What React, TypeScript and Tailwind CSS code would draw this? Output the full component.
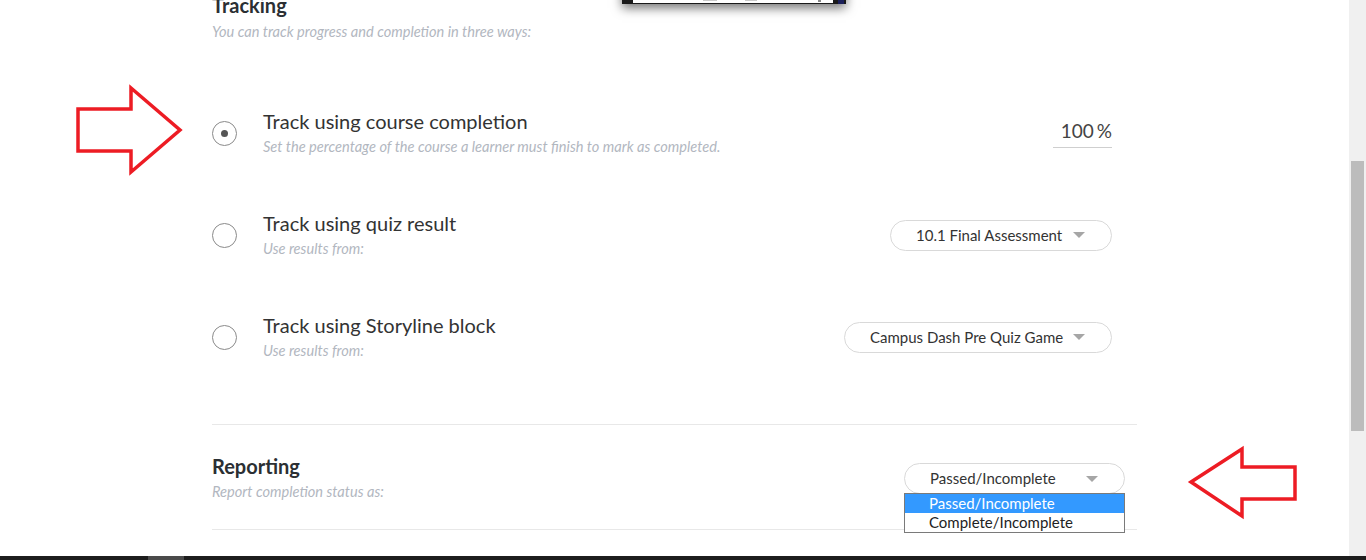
import React from "react";

const FONT = "font-['Lato','Open_Sans','Liberation_Sans',sans-serif]";

function Caret() {
  return (
    <svg width="12" height="6" viewBox="0 0 12 6" className="shrink-0">
      <path d="M0 0 L12 0 L6 6 Z" fill="#a6a6a6" />
    </svg>
  );
}

function Select({ label, width }: { label: string; width: string }) {
  return (
    <div
      className={`flex h-[31px] ${width} items-center justify-between rounded-full border border-[#d9d9d9] bg-white pl-[25px] pr-[26px] text-[15px] text-[#333]`}
    >
      <span>{label}</span>
      <Caret />
    </div>
  );
}

function Radio({ checked }: { checked?: boolean }) {
  return (
    <div className="flex h-[25px] w-[25px] shrink-0 items-center justify-center rounded-full border border-[#8a8a8a] bg-white">
      {checked && <div className="h-[7px] w-[7px] rounded-full bg-[#555]" />}
    </div>
  );
}

function TrackRow({
  title,
  hint,
  checked,
  control,
}: {
  title: string;
  hint: string;
  checked?: boolean;
  control: React.ReactNode;
}) {
  return (
    <div className="flex h-[48px] items-center pr-[25px]">
      <Radio checked={checked} />
      <div className="ml-[26px] flex flex-1 flex-col">
        <div className="text-[20px] leading-[22px] text-[#333]">{title}</div>
        <div className="mt-[5px] text-[14.6px] italic leading-[20px] text-[#b2b7bf]">{hint}</div>
      </div>
      {control}
    </div>
  );
}

export default function App() {
  return (
    <div className={`h-[560px] w-[1366px] overflow-hidden bg-white ${FONT}`}>
      <div className="flex h-[556px]">
        {/* ===== Page ===== */}
        <div className="relative flex-1 overflow-hidden">
          {/* floating screenshot, scrolled off the top */}
          <div className="absolute left-[622px] top-[-40px] h-[44px] w-[224px] bg-[#1a1a1a] shadow-[0_4px_10px_rgba(0,0,0,0.55)]">
            <div className="absolute bottom-[1px] left-[11px] right-[13px] h-[43px] bg-white">
              <div className="absolute bottom-[2px] left-[70px] h-[1px] w-[14px] bg-[#c8c8c8]" />
              <div className="absolute bottom-[2px] left-[112px] h-[1px] w-[12px] bg-[#c8c8c8]" />
              <div className="absolute bottom-[1px] left-[185px] h-[3px] w-[3px] bg-[#888]" />
            </div>
            <div className="absolute bottom-0 right-[2px] h-[4px] w-[6px] bg-[#1b1f5a]" />
          </div>

          <div className="ml-[212px] w-[925px]">
            {/* ===== Tracking ===== */}
            <h2 className="-mt-[7px] text-[20px] font-bold leading-[24px] text-[#2b2f33]">Tracking</h2>
            <p className="mt-[5px] text-[14.6px] italic leading-[20px] text-[#b2b7bf]">
              You can track progress and completion in three ways:
            </p>

            <div className="mt-[67px] flex flex-col gap-[54px]">
              <TrackRow
                checked
                title="Track using course completion"
                hint="Set the percentage of the course a learner must finish to mark as completed."
                control={
                  <div className="flex h-[30px] w-[59px] items-center justify-end border-b border-[#cfcfcf] pb-[2px] text-[19px] text-[#444]">
                    100<span className="ml-[3px]">%</span>
                  </div>
                }
              />
              <TrackRow
                title="Track using quiz result"
                hint="Use results from:"
                control={<Select label="10.1 Final Assessment" width="w-[222px]" />}
              />
              <TrackRow
                title="Track using Storyline block"
                hint="Use results from:"
                control={<Select label="Campus Dash Pre Quiz Game" width="w-[268px]" />}
              />
            </div>

            <div className="mt-[63px] h-px bg-[#e8e8e8]" />

            {/* ===== Reporting ===== */}
            <div className="mt-[29px] flex items-start pr-[12px]">
              <div className="flex flex-1 flex-col">
                <h2 className="text-[20px] font-bold leading-[24px] text-[#2b2f33]">Reporting</h2>
                <p className="mt-[4px] text-[14.6px] italic leading-[20px] text-[#b2b7bf]">
                  Report completion status as:
                </p>
              </div>
              <div className="relative mt-[9px]">
                <Select label="Passed/Incomplete" width="w-[221px]" />
                <div className="absolute left-0 top-[30px] z-10 w-[221px] border border-[#7a7a7a] bg-white text-[15px] leading-[19px]">
                  <div className="bg-[#3399ff] pl-[24px] text-white">Passed/Incomplete</div>
                  <div className="pl-[24px] text-[#222]">Complete/Incomplete</div>
                </div>
              </div>
            </div>

            <div className="mt-[27px] h-px bg-[#e8e8e8]" />
          </div>

          {/* ===== Annotation arrows ===== */}
          <svg className="absolute left-0 top-0" width="1349" height="556">
            <polygon
              points="78,109 131,109 131,88 180,130 131,172 131,151 78,151"
              fill="none"
              stroke="#ed1c24"
              strokeWidth="3.5"
            />
            <polygon
              points="1191,482 1242,449 1242,467 1295,467 1295,499 1242,499 1242,516"
              fill="none"
              stroke="#ed1c24"
              strokeWidth="3.5"
            />
          </svg>
        </div>

        {/* ===== Scrollbar ===== */}
        <div className="w-[17px] bg-[#f0f0f0] pl-[2px] pr-[2px] pt-[161px]">
          <div className="h-[270px] bg-[#bcbcbc]" />
        </div>
      </div>

      {/* ===== Taskbar edge ===== */}
      <div className="flex h-[4px] bg-[#1d1d1d]">
        <div className="ml-[148px] w-[36px] bg-[#4a4a4a]" />
      </div>
    </div>
  );
}
